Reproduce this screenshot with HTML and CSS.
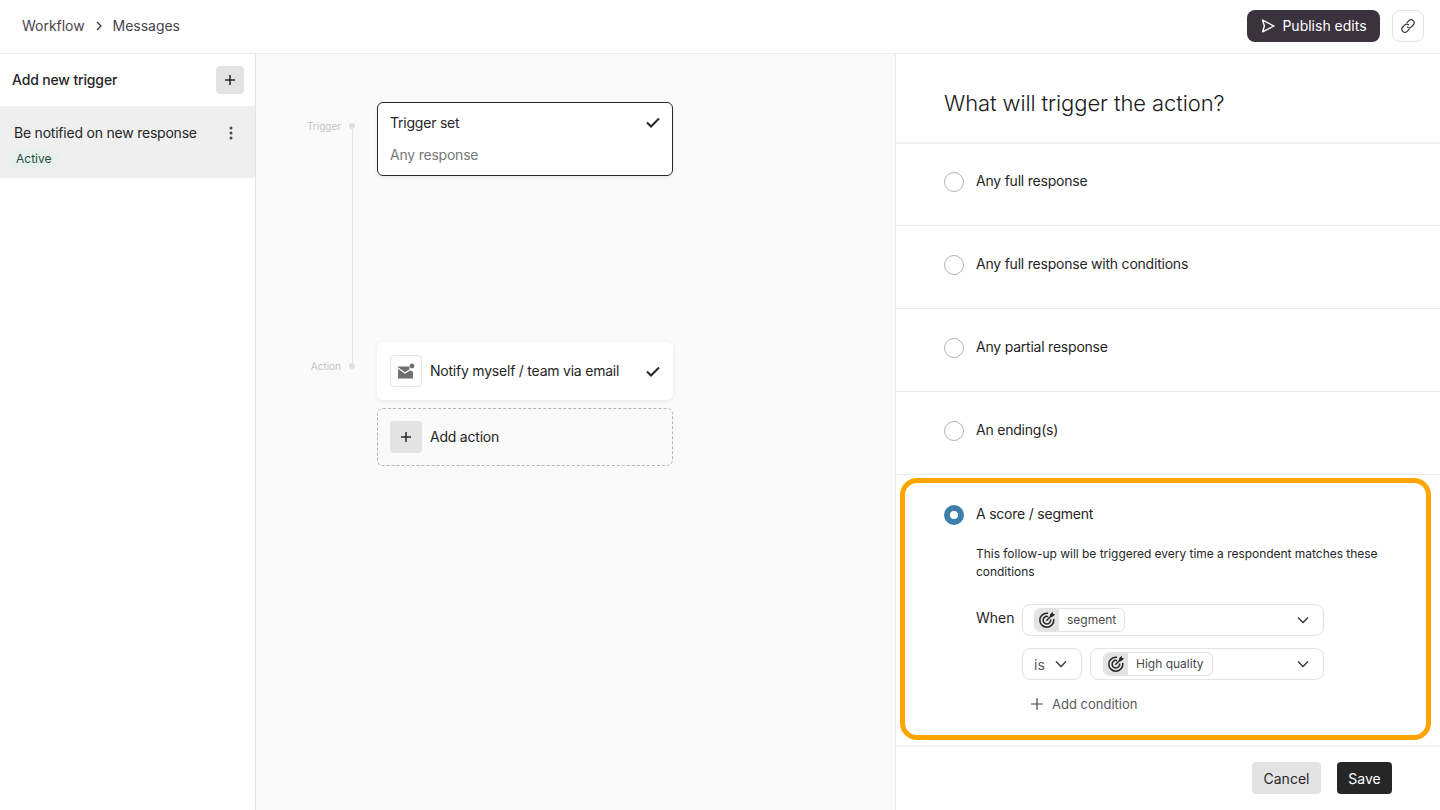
FILE: index.html
```html
<!DOCTYPE html>
<html lang="en">
<head>
<meta charset="utf-8">
<title>Messages</title>
<link rel="stylesheet" href="styles.css">
</head>
<body>
<div class="app">
  <header class="topbar">
    <nav class="crumbs">
      <span>Workflow</span>
      <svg class="crumb-sep" width="8" height="10" viewBox="0 0 8 10"><path d="M2 1l4 4-4 4" fill="none" stroke="#3a333d" stroke-width="1.3"/></svg>
      <span>Messages</span>
    </nav>
    <div class="top-actions">
      <button class="publish">
        <svg width="16" height="16" viewBox="0 0 16 16"><path d="M2.6 2.2L14 8 2.6 13.8 4.4 8z" fill="none" stroke="#fff" stroke-width="1.4" stroke-linejoin="round"/></svg>
        <span>Publish edits</span>
      </button>
      <button class="link-btn">
        <svg width="16" height="16" viewBox="0 0 16 16" fill="none" stroke="#3a333d" stroke-width="1.2" stroke-linecap="round"><path d="M7 4.6l1.9-1.9a3 3 0 0 1 4.3 4.3l-1.9 1.9a3 3 0 0 1-3.9.3"/><path d="M9 11.4l-1.9 1.9a3 3 0 0 1-4.3-4.3l1.9-1.9a3 3 0 0 1 3.9-.3"/></svg>
      </button>
    </div>
  </header>
  <div class="body">
    <aside class="sidebar">
      <div class="side-head">
        <span class="side-head-text">Add new trigger</span>
        <button class="square-plus small">
          <svg width="10" height="10" viewBox="0 0 10 10"><path d="M5 0v10M0 5h10" stroke="#262627" stroke-width="1.5"/></svg>
        </button>
      </div>
      <div class="side-item">
        <div class="side-item-text">
          <div class="side-title">Be notified on new response</div>
          <span class="badge">Active</span>
        </div>
        <svg class="kebab" width="4" height="14" viewBox="0 0 4 14"><circle cx="2" cy="2" r="1.5" fill="#4a4a4c"/><circle cx="2" cy="7" r="1.5" fill="#4a4a4c"/><circle cx="2" cy="12" r="1.5" fill="#4a4a4c"/></svg>
      </div>
    </aside>
    <main class="canvas">
      <div class="flow">
        <div class="flow-row">
          <div class="flow-label"><span>Trigger</span><i class="dot"></i></div>
          <div class="card trigger-card">
            <div class="card-line">
              <span>Trigger set</span>
              <svg width="14" height="11" viewBox="0 0 14 11"><path d="M1 5.5l4 4 8-8" fill="none" stroke="#262627" stroke-width="2"/></svg>
            </div>
            <div class="card-sub">Any response</div>
          </div>
        </div>
        <div class="flow-row second">
          <div class="flow-label"><span>Action</span><i class="dot"></i></div>
          <div class="stack">
            <div class="card action-card">
              <span class="icon-box">
                <svg width="18" height="16" viewBox="0 0 18 16"><path d="M1 3.5h11.5v2.8A3.5 3.5 0 0 0 16 8.4V15.5H1z" fill="#6f6f72"/><path d="M1 5l7 5 6-4" fill="none" stroke="#fff" stroke-width="1.3"/><circle cx="15" cy="3" r="2.4" fill="#6f6f72"/></svg>
              </span>
              <span class="grow">Notify myself / team via email</span>
              <svg width="14" height="11" viewBox="0 0 14 11"><path d="M1 5.5l4 4 8-8" fill="none" stroke="#262627" stroke-width="2"/></svg>
            </div>
            <div class="add-action">
              <span class="square-plus">
                <svg width="10" height="10" viewBox="0 0 10 10"><path d="M5 0v10M0 5h10" stroke="#262627" stroke-width="1.5"/></svg>
              </span>
              <span class="add-action-text">Add action</span>
            </div>
          </div>
        </div>
      </div>
    </main>
    <section class="panel">
      <h1 class="panel-title">What will trigger the action?</h1>
      <div class="option"><i class="radio"></i><span>Any full response</span></div>
      <div class="option"><i class="radio"></i><span>Any full response with conditions</span></div>
      <div class="option"><i class="radio"></i><span>Any partial response</span></div>
      <div class="option"><i class="radio"></i><span>An ending(s)</span></div>
      <div class="option selected">
        <div class="option-head"><i class="radio on"></i><span>A score / segment</span></div>
        <p class="option-desc">This follow-up will be triggered every time a respondent matches these conditions</p>
        <div class="cond-grid">
          <span class="when">When</span>
          <div class="select wide">
            <span class="chip">
              <span class="chip-icon"><svg width="18" height="18" viewBox="0 0 18 18" fill="none" stroke="#262627" stroke-width="1.5" stroke-linecap="round"><path d="M9.5 2.2A7 7 0 1 0 15.8 8.5"/><path d="M9.5 5.4A3.8 3.8 0 1 0 12.7 9"/><path d="M8.8 9.2l4-4"/><path d="M12.6 5.3V3.2L14.4 1.6V3.6H16.4L14.7 5.3z" fill="#262627" stroke-width="1"/></svg></span>
              <span class="chip-text">segment</span>
            </span>
            <svg class="chev" width="12" height="8" viewBox="0 0 12 8"><path d="M1 1.5l5 5 5-5" fill="none" stroke="#3a333d" stroke-width="1.4"/></svg>
          </div>
          <div class="cond-row">
            <div class="select op">
              <span class="op-text">is</span>
              <svg class="chev" width="12" height="8" viewBox="0 0 12 8"><path d="M1 1.5l5 5 5-5" fill="none" stroke="#3a333d" stroke-width="1.4"/></svg>
            </div>
            <div class="select val">
              <span class="chip">
                <span class="chip-icon"><svg width="18" height="18" viewBox="0 0 18 18" fill="none" stroke="#262627" stroke-width="1.5" stroke-linecap="round"><path d="M9.5 2.2A7 7 0 1 0 15.8 8.5"/><path d="M9.5 5.4A3.8 3.8 0 1 0 12.7 9"/><path d="M8.8 9.2l4-4"/><path d="M12.6 5.3V3.2L14.4 1.6V3.6H16.4L14.7 5.3z" fill="#262627" stroke-width="1"/></svg></span>
                <span class="chip-text">High quality</span>
              </span>
              <svg class="chev" width="12" height="8" viewBox="0 0 12 8"><path d="M1 1.5l5 5 5-5" fill="none" stroke="#3a333d" stroke-width="1.4"/></svg>
            </div>
          </div>
          <div class="add-cond">
            <svg width="12" height="12" viewBox="0 0 12 12"><path d="M6 0v12M0 6h12" stroke="#4a4a4c" stroke-width="1.2"/></svg>
            <span>Add condition</span>
          </div>
        </div>
      </div>
      <footer class="panel-foot">
        <button class="btn cancel">Cancel</button>
        <button class="btn save">Save</button>
      </footer>
    </section>
  </div>
</div>
</body>
</html>
```
FILE: styles.css
```css
*, *::before, *::after { box-sizing: border-box; }
html, body { margin: 0; height: 100%; }
body { font-family: Inter, "Liberation Sans", sans-serif; font-size: 14px; color: #262627; background: #fff; overflow: hidden; letter-spacing: -.22px; }
button { font: inherit; letter-spacing: 0; border: 0; cursor: pointer; padding: 0; }
.app { display: flex; flex-direction: column; height: 810px; }

.topbar { height: 54px; flex: none; display: flex; align-items: center; justify-content: space-between; padding: 0 16px 2px 22px; border-bottom: 1px solid #eaeaea; }
.crumbs { display: flex; align-items: center; gap: 10px; color: #4a444d; font-size: 14px; letter-spacing: -.03px; }
.top-actions { display: flex; align-items: center; gap: 12px; }
.publish { width: 133px; height: 32px; border-radius: 8px; background: #3a333d; color: #fff; display: flex; align-items: center; justify-content: center; gap: 6px; font-size: 14px; }
.link-btn { width: 32px; height: 32px; border-radius: 8px; background: #fff; border: 1px solid #e3e3e3; display: flex; align-items: center; justify-content: center; }

.body { flex: 1; display: flex; min-height: 0; }
.sidebar { width: 256px; flex: none; border-right: 1px solid #e5e5e5; }
.side-head { height: 52px; display: flex; align-items: center; justify-content: space-between; padding: 0 11px 0 12px; }
.side-head-text { font-weight: 450; letter-spacing: -.15px; padding-bottom: 2px; }
.square-plus { width: 32px; height: 32px; border-radius: 4px; background: #e3e3e3; display: flex; align-items: center; justify-content: center; flex: none; }
.square-plus.small { width: 28px; height: 28px; }
.side-item { height: 72px; background: #efefef; display: flex; justify-content: space-between; padding: 18px 22px 0 14px; }
.side-title { line-height: 17px; }
.side-item-text { display: flex; flex-direction: column; align-items: flex-start; }
.badge { margin: 9px 0 0 -6px; height: 18px; padding: 0 8px; border-radius: 9px; background: #e7f0ec; color: #1f4d3a; font-size: 12px; line-height: 18px; letter-spacing: 0; }
.kebab { margin-top: 2px; }

.canvas { width: 640px; flex: none; background: #fafafa; padding: 48px 0 0 40px; }
.flow { position: relative; }
.flow::before { content: ""; position: absolute; left: 56px; top: 28px; height: 236px; width: 1px; background: #e3e3e3; }
.flow-row { display: flex; align-items: flex-start; }
.flow-row.second { margin-top: 166px; }
.flow-label { width: 81px; flex: none; display: flex; justify-content: flex-end; align-items: center; gap: 8px; padding-right: 22px; color: #c4c4c4; font-size: 10px; line-height: 12px; margin-top: 18px; letter-spacing: 0; }
.dot { width: 6px; height: 6px; border-radius: 50%; background: #e0e0e0; flex: none; }
.card { width: 296px; background: #fff; border-radius: 6px; }
.trigger-card { height: 74px; border: 1px solid #262627; padding: 11px 12px 0; box-shadow: 0 2px 4px rgba(0,0,0,.06); }
.card-line { display: flex; justify-content: space-between; align-items: center; height: 17px; }
.card-sub { margin-top: 15px; color: #77777a; line-height: 17px; }
.stack { display: flex; flex-direction: column; gap: 8px; }
.action-card { height: 58px; display: flex; align-items: center; gap: 8px; padding: 0 13px; box-shadow: 0 1px 4px rgba(0,0,0,.08); }
.grow { flex: 1; padding-bottom: 2px; }
.icon-box { width: 32px; height: 32px; border: 1px solid #e5e5e5; border-radius: 4px; display: flex; align-items: center; justify-content: center; flex: none; }
.add-action { width: 296px; height: 58px; border: 1px dashed #b5b5b5; border-radius: 6px; display: flex; align-items: center; gap: 8px; padding: 0 12px; }
.add-action-text { padding-bottom: 2px; }

.panel { flex: 1; display: flex; flex-direction: column; min-width: 0; background: #fff; box-shadow: -1px 0 0 #eaeaea; }
.panel-title { margin: 0; height: 89px; padding: 35px 0 0 48px; font-size: 22px; line-height: 28px; font-weight: 300; letter-spacing: -.1px; color: #19191a; border-bottom: 1px solid #f1f1f1; box-shadow: 0 1px 0 #f1f1f1; }
.option { height: 83px; flex: none; display: flex; align-items: center; gap: 12px; padding: 0 48px 4px; border-bottom: 1px solid #e9e9e9; }
.option > span { padding-bottom: 4px; }
.radio { width: 20px; height: 20px; border-radius: 50%; border: 1px solid #b5b5b5; background: #fff; flex: none; }
.radio.on { border: 6px solid #3d7fa8; }
.option.selected { height: 272px; position: relative; display: block; padding: 30px 48px 0; border-bottom: 2px solid #efefef; }
.option.selected::after { content: ""; position: absolute; left: 4px; right: 9px; top: 3px; height: 262px; border: 5px solid #ffa500; border-radius: 17px; pointer-events: none; }
.option-head { display: flex; align-items: center; gap: 12px; height: 20px; }
.option-head > span { padding-bottom: 4px; }
.option-desc { margin: 20px 0 0 32px; width: 420px; font-size: 12px; line-height: 18px; letter-spacing: -.03px; }
.cond-grid { display: grid; grid-template-columns: 46px 302px; row-gap: 12px; margin: 23px 0 0 32px; }
.when { line-height: 28px; font-size: 14px; letter-spacing: 0; }
.select { height: 32px; border: 1px solid #e3e3e3; border-radius: 8px; display: flex; align-items: center; justify-content: space-between; padding: 0 14px 0 11px; background: #fff; }
.cond-row { grid-column: 2; display: flex; gap: 8px; }
.select.op { width: 60px; padding: 0 14px 0 11px; }
.op-text { color: #5a5a5d; font-size: 14px; letter-spacing: 0; }
.select.val { flex: 1; padding: 0 14px 0 12px; }
.chip { display: flex; align-items: stretch; height: 24px; border: 1px solid #e3e3e3; border-radius: 6px; overflow: hidden; }
.chip-icon { width: 24px; background: #e3e3e3; display: flex; align-items: center; justify-content: center; }
.chip-text { padding: 0 8px; font-size: 12px; line-height: 22px; color: #4a4a4c; letter-spacing: 0; }
.add-cond { grid-column: 2; display: flex; align-items: center; gap: 9px; padding-left: 9px; margin-top: 2px; height: 20px; color: #5a5a5d; font-size: 13px; letter-spacing: 0; }

.panel-foot { flex: 1; display: flex; justify-content: flex-end; align-items: flex-start; gap: 16px; padding: 15px 48px 0 0; }
.btn { height: 32px; border-radius: 4px; font-size: 14px; }
.cancel { width: 69px; background: #e3e3e3; color: #262627; }
.save { width: 55px; background: #262627; color: #fff; }
```
